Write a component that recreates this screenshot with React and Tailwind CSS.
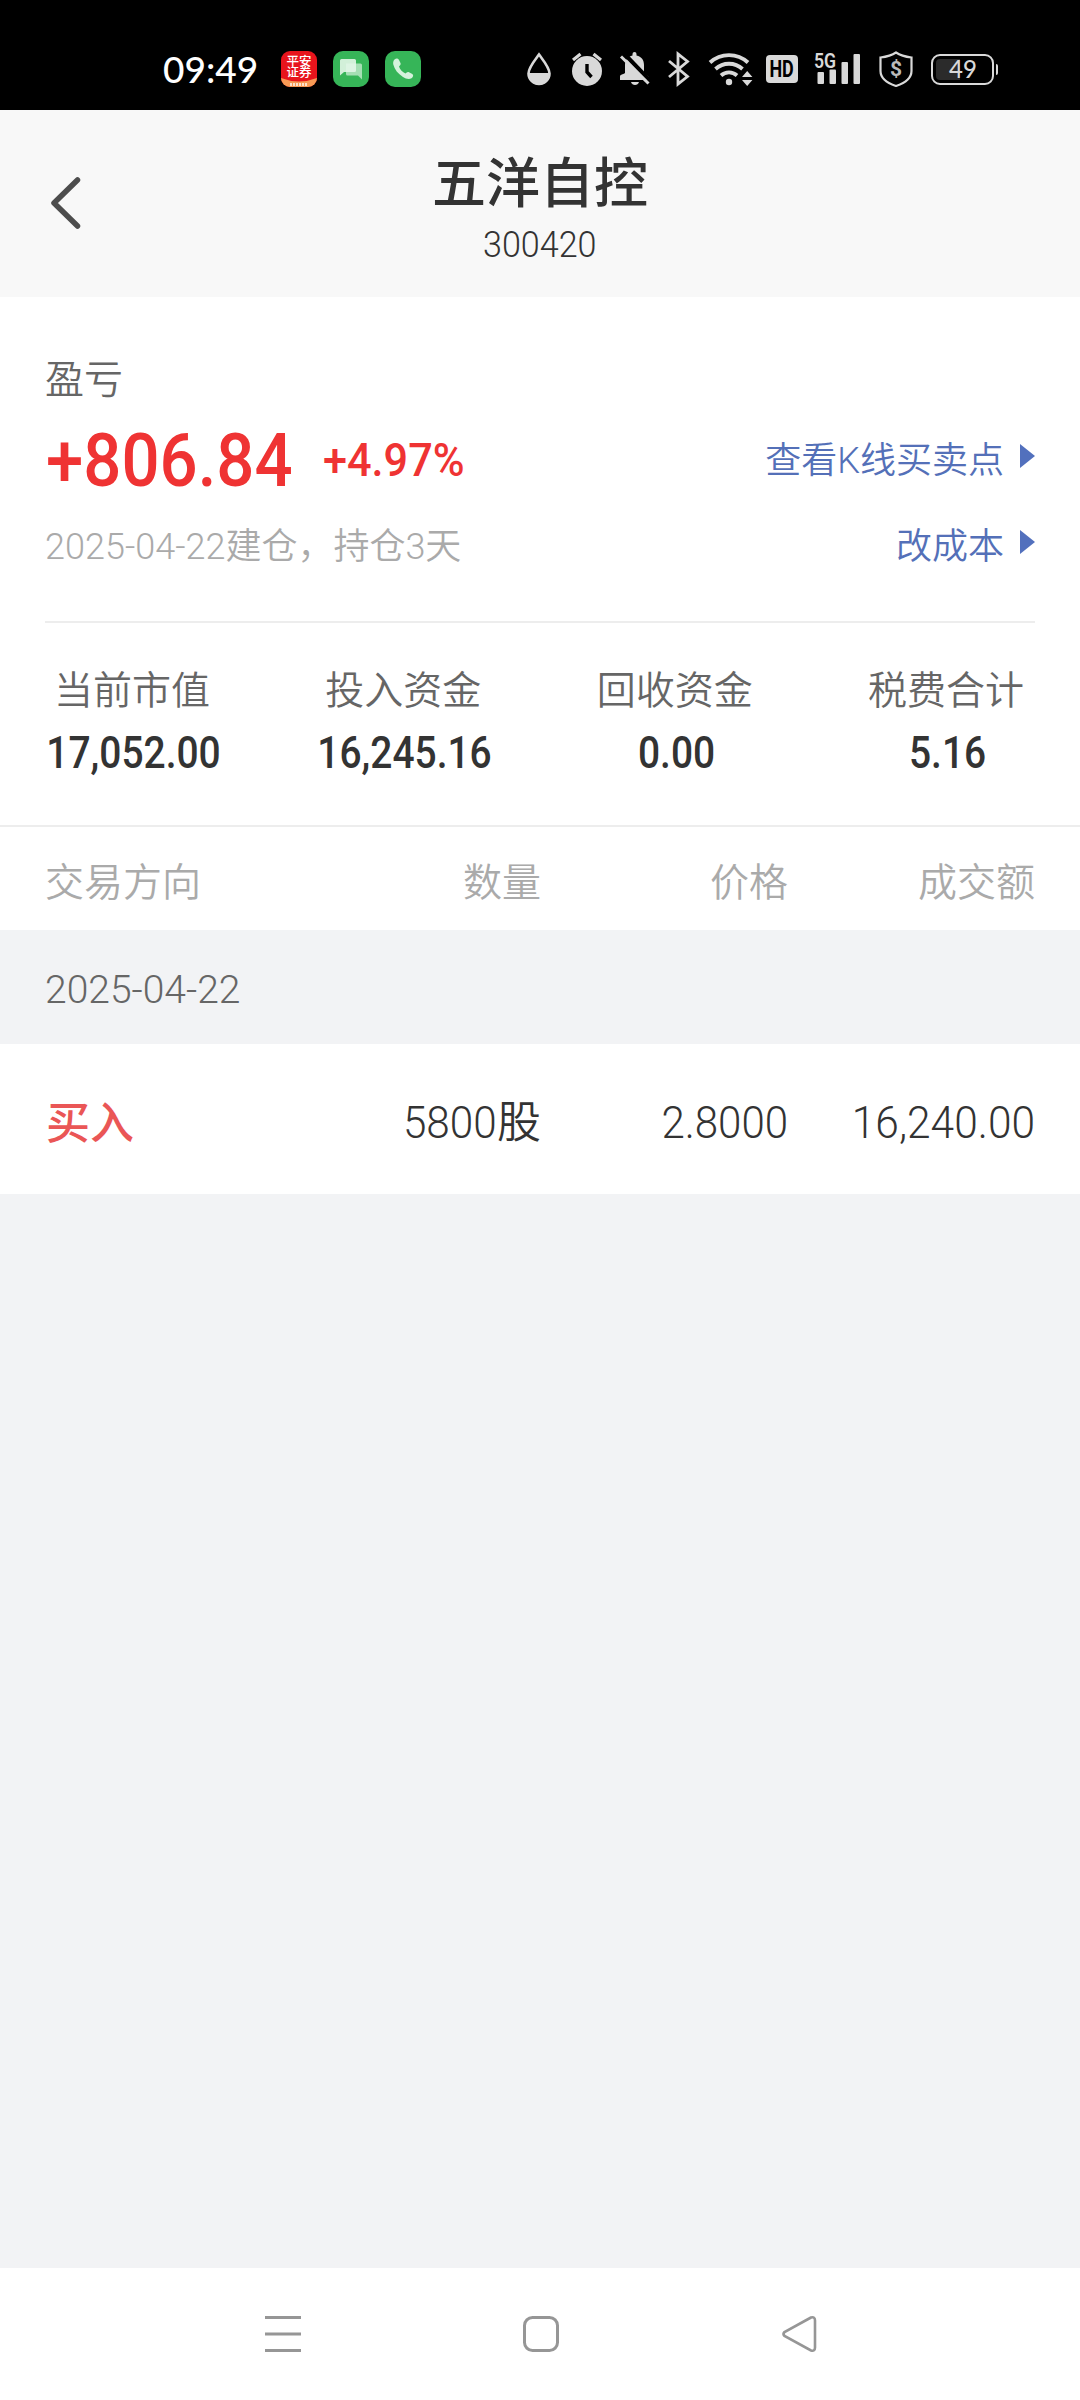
import React from 'react';

const stats = [
  { label: '当前市值', value: '17,052.00' },
  { label: '投入资金', value: '16,245.16' },
  { label: '回收资金', value: '0.00' },
  { label: '税费合计', value: '5.16' },
];

const trades = [
  { date: '2025-04-22', side: '买入', amount: '5800', price: '2.8000', total: '16,240.00' },
];

const StatusBar = () => (
  <div className="flex h-[110px] items-center bg-black pt-7 pl-[163px] text-[#d9d9d9]">
    <span className="w-[118px] font-[Lato] text-[37px] leading-10 font-medium text-white">09:49</span>

    {/* app notifications */}
    <div className="flex gap-4">
      <div className="flex h-9 w-9 flex-col items-center overflow-hidden rounded-[9px] bg-[#e8141c] pt-[5px] text-[12.500px] leading-[11px] font-medium text-white">
        <span className="text-center whitespace-nowrap">平安</span>
        <span className="text-center whitespace-nowrap">证券</span>
        <svg width="36" height="10" viewBox="0 0 36 10" className="shrink-0">
          <path d="M0 0Q18 7 36 0V10H0Z" fill="#f79a55" />
          <path d="M9 6.500h18" stroke="#fff" strokeWidth="3" strokeDasharray="2 1" opacity=".7" />
        </svg>
      </div>
      <svg width="36" height="36" viewBox="0 0 36 36">
        <rect width="36" height="36" rx="10" fill="#36b558" />
        <path d="M13 12.500h14.500a1.500 1.500 0 0 1 1.500 1.500v14.500l-4-4H14.500a1.500 1.500 0 0 1-1.500-1.500Z" fill="#a5dfb4" />
        <path d="M8.500 8h13A1.500 1.500 0 0 1 23 9.500v10a1.500 1.500 0 0 1-1.500 1.500H11l-4 3.500V9.500A1.500 1.500 0 0 1 8.500 8Z" fill="#e3f6e8" opacity=".9" />
      </svg>
      <svg width="36" height="36" viewBox="0 0 36 36">
        <rect width="36" height="36" rx="10" fill="#36b558" />
        <path d="M9.500 8.500c2-1.500 3.500-1 4.500.5l1.500 3c.7 1.500-.7 2.500-1.500 3.500 1 3.500 3.500 5.500 6.500 7 1.200-1 2-2 3.500-1.200l3.300 1.800c1.500 1 .9 3-.8 4.200-2.500 1.400-6 .4-8.500-1.300-5-3.300-8.500-7.500-9.700-12.500-.4-2 0-4 1.200-5Z" fill="#d5f2dc" />
      </svg>
    </div>

    {/* system icons */}
    <svg className="ml-[105px]" width="26" height="34" viewBox="0 0 26 34">
      <path d="M13 2.500C9 8 2.500 15.500 2.500 21.500a10.500 10.500 0 0 0 21 0C23.500 15.500 17 8 13 2.500Z" fill="none" stroke="currentColor" strokeWidth="2.600" />
      <path d="M2 21h22v1a11 11 0 0 1-22 0Z" fill="currentColor" />
    </svg>
    <svg className="ml-[19px]" width="32" height="34" viewBox="0 0 32 34">
      <circle cx="16" cy="19" r="15" fill="currentColor" />
      <path d="M2 8l7.500-6M30 8l-7.500-6" stroke="currentColor" strokeWidth="3.200" />
      <path d="M16 12v8l4.500 5" fill="none" stroke="#000" strokeWidth="3.400" />
    </svg>
    <svg className="ml-[15px]" width="34" height="36" viewBox="0 0 34 36">
      <path d="M7 27V14c0-5 3-8.500 7.500-9.500V3a2 2 0 0 1 4 0v1.500C23.500 5.500 26 9 26 14v8c1 2 5 2 5 5v2H2v-3.500c0-2 3-2 5-3.500Z" fill="currentColor" />
      <path d="M13 31h8c-1 4-7 4-8 0Z" fill="currentColor" />
      <path d="M6 2.500l27.500 28.500" stroke="#000" strokeWidth="4" />
      <path d="M3 5.500l27.500 27" stroke="currentColor" strokeWidth="3" />
    </svg>
    <svg className="ml-[15px]" width="24" height="36" viewBox="0 0 24 36">
      <path d="M2 10l18.500 15.500L11 33V3l9.500 7.500L2 26" fill="none" stroke="currentColor" strokeWidth="2.800" />
    </svg>
    <svg className="ml-[17px]" width="46" height="36" viewBox="0 0 46 36">
      <g fill="none" stroke="currentColor" strokeWidth="3.800">
        <path d="M2 11.500a28 28 0 0 1 38 0" />
        <path d="M7.500 18a20 20 0 0 1 27 0" />
        <path d="M13 24.500a12 12 0 0 1 16 0" />
      </g>
      <circle cx="21" cy="31" r="3.200" fill="currentColor" />
      <path d="M34 26l5.200-6 5.200 6ZM34 29l5.200 6 5.200-6Z" fill="currentColor" />
    </svg>
    <div className="ml-[12px] flex h-7 w-8 items-center justify-center rounded-[4px] bg-[#d9d9d9] pt-px font-[Roboto] text-[23px] leading-7 font-bold text-black">
      <span className="scale-x-[0.78]">HD</span>
    </div>
    <div className="ml-[16px] h-9 w-[48px]">
      <div className="h-[17px] origin-left scale-x-[0.84] pt-0.5 font-[Roboto] text-[21px] leading-[17px] font-semibold">5G</div>
      <svg className="-mt-[17px]" width="48" height="36" viewBox="0 0 48 36" fill="currentColor">
        <rect x="3.500" y="21" width="6.500" height="12" rx="1" />
        <rect x="15.500" y="18.500" width="6.500" height="14.500" rx="1" />
        <rect x="27.500" y="11" width="6.500" height="22" rx="1" />
        <rect x="39.500" y="3" width="6.500" height="30" rx="1" />
      </svg>
    </div>
    <div className="ml-[17px] grid h-9 w-[34px] place-items-center *:col-start-1 *:row-start-1">
      <svg width="34" height="36" viewBox="0 0 34 36">
        <path d="M17 1.500C12 5 6 6 1.500 6.500V20c0 7.500 8 12.500 15.500 15 7.500-2.500 15.500-7.500 15.500-15V6.500C28 6 22 5 17 1.500Z" fill="none" stroke="currentColor" strokeWidth="2.200" />
      </svg>
      <span className="font-[Roboto] text-[21px] leading-5 font-bold text-[#bbb]">$</span>
    </div>
    <div className="ml-[18px] flex items-center">
      <div className="flex h-[31px] w-[63px] rounded-[9px] border-2 border-[#d9d9d9] bg-[linear-gradient(90deg,#2b2b2b_46%,#000_46%)] bg-clip-content p-[3px]">
        <span className="w-full pl-px text-center font-[Lato] text-[24px] leading-[20px] font-medium">49</span>
      </div>
      <div className="ml-[2px] h-[11px] w-[2px] rounded-r bg-[#d9d9d9]"></div>
    </div>
  </div>
);

const Header = () => (
  <div className="flex h-[187px] bg-[#f8f8f8] text-[#333]">
    <div className="flex w-[200px] pt-[65px] pl-[49px]">
      <svg width="34" height="56" viewBox="0 0 34 56">
        <path d="M28.500 5L5 28l23.500 23" fill="none" stroke="#4d4d4d" strokeWidth="5.500" strokeLinecap="round" strokeLinejoin="round" />
      </svg>
    </div>
    <div className="flex flex-1 flex-col items-center gap-2.5 pt-[45px]">
      <h1 className="text-[54px] leading-[60px] font-medium">五洋自控</h1>
      <p className="scale-x-[0.935] text-[36.500px] leading-10 font-[350]">300420</p>
    </div>
    <div className="w-[200px]"></div>
  </div>
);

const Link = ({ children }) => (
  <a className="flex items-center gap-4 pt-0.5 text-[36px] leading-10 font-[350] text-[#5470b8]">
    {children}
    <svg className="-mt-2.5" width="15" height="24" viewBox="0 0 15 24">
      <path d="M0 0l15 12L0 24Z" fill="#5270bd" />
    </svg>
  </a>
);

const Summary = () => (
  <div className="bg-white px-[45px] pt-[63px]">
    <div className="text-[39px] leading-10 font-[350] text-[#666]">盈亏</div>
    <div className="mt-5 flex h-20 items-center justify-between">
      <div className="flex items-center pl-px font-medium text-[#ef3333]">
        <span className="w-[277px] origin-left scale-x-[0.895] text-[75px] leading-20">+806.84</span>
        <span className="origin-left scale-x-[0.94] text-[46px] leading-20">+4.97%</span>
      </div>
      <Link>查看K线买卖点</Link>
    </div>
    <div className="mt-[25px] flex items-center justify-between">
      <span className="pt-0.5 text-[36px] leading-10 font-[350] text-[#aaa]">2025-04-22建仓，持仓3天</span>
      <Link>改成本</Link>
    </div>
    <div className="mt-[54px] flex justify-between border-t-2 border-[#ededed] pt-12 pb-[52px]">
      {stats.map((item) => (
        <div key={item.label} className="flex w-[176px] flex-col items-center gap-[22px] whitespace-nowrap">
          <span className="pr-0.5 text-[39px] leading-10 font-[350] text-[#666]">{item.label}</span>
          <span className="scale-x-[0.885] pl-px text-[44px] leading-10 font-medium text-[#333]">{item.value}</span>
        </div>
      ))}
    </div>
  </div>
);

const TradeList = () => (
  <div>
    <div className="grid h-[105px] grid-cols-[249px_247px_247px_247px] items-center border-t-2 border-[#ededed] bg-white px-[45px] pt-[9px] text-right text-[39px] leading-10 font-[350] text-[#aaa]">
      <span className="text-left">交易方向</span>
      <span>数量</span>
      <span>价格</span>
      <span>成交额</span>
    </div>
    {trades.map((trade) => (
      <div key={trade.date}>
        <div className="flex h-[114px] items-center px-[45px] pt-1.5 text-[39px] leading-10 font-[350] text-[#666]">{trade.date}</div>
        <div className="grid h-[150px] grid-cols-[249px_247px_247px_247px] items-center bg-white px-[45px] pt-2 text-right text-[44px] leading-12 font-[350] text-[#333]">
          <span className="pt-0.5 pl-px text-left font-medium text-[#ea5656]">{trade.side}</span>
          <span className="flex justify-end">
            <span className="origin-right scale-x-[0.96]">{trade.amount}</span>股
          </span>
          <span className="origin-right scale-x-[0.955]">{trade.price}</span>
          <span className="origin-right scale-x-[0.965]">{trade.total}</span>
        </div>
      </div>
    ))}
  </div>
);

const NavBar = () => (
  <div className="flex h-[132px] items-center justify-center gap-[218px] bg-white pl-0.5">
    <svg width="40" height="40" viewBox="0 0 40 40" fill="none" stroke="#969696" strokeWidth="3">
      <path d="M2 3.500h36M2 20h36M2 36.500h36" />
    </svg>
    <svg width="40" height="40" viewBox="0 0 40 40" fill="none" stroke="#969696" strokeWidth="3">
      <rect x="3.500" y="3.500" width="33" height="33" rx="8" />
    </svg>
    <svg width="40" height="40" viewBox="0 0 40 40" fill="none" stroke="#969696" strokeWidth="2.600">
      <path d="M32 3.500L5.500 18q-2 2 0 4L32 36.500q4 1 4-3v-27q0-4-4-3Z" />
    </svg>
  </div>
);

const App = () => (
  <div className="flex h-[2400px] w-[1080px] flex-col bg-[#f2f3f5] font-[Roboto,'Noto_Sans_CJK_SC',sans-serif]">
    <StatusBar />
    <Header />
    <Summary />
    <TradeList />
    <div className="flex-1"></div>
    <NavBar />
  </div>
);

export default App;
